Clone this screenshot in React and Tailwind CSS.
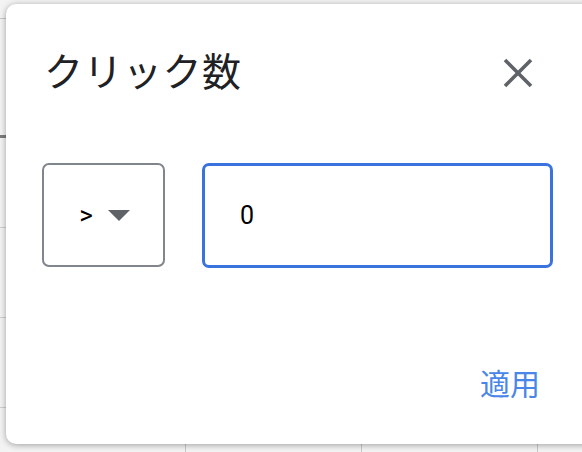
import React from "react";

const font = { fontFamily: '"Noto Sans CJK JP", "Noto Sans", Roboto, sans-serif' };

function Background() {
  return (
    <div className="flex flex-col w-full h-full bg-[#f3f3f3]">
      <div className="h-[19px] shrink-0 border-b border-[#c8c8c8]" />
      <div className="h-[119px] shrink-0 border-b-[3px] border-[#7a7d80]" />
      <div className="h-[90px] shrink-0 border-b border-[#cfcfcf]" />
      <div className="h-[90px] shrink-0 border-b border-[#cfcfcf]" />
      <div className="h-[90px] shrink-0 border-b border-[#cfcfcf]" />
      <div className="flex h-[90px] shrink-0 text-[28px] text-[#333]" style={font}>
        <div className="w-[186px] border-r border-[#c8c8c8]" />
        <div className="w-[176px] border-r border-[#c8c8c8] flex justify-end pr-[22px] pt-[38px] leading-none">4</div>
        <div className="w-[176px] border-r border-[#c8c8c8] flex justify-end pr-[20px] pt-[38px] leading-none">0</div>
        <div className="flex-1" />
      </div>
    </div>
  );
}

export default function App() {
  return (
    <div className="relative w-[582px] h-[452px] overflow-hidden" style={font}>
      <Background />
      <div className="absolute left-[6px] top-[4px] w-[620px] h-[440px] bg-white rounded-[10px] shadow-[0_1px_6px_rgba(0,0,0,0.35)] flex flex-col">
        <div className="flex items-start justify-between pl-[38px] pt-[37px] pr-[93px]">
          <div className="text-[39px] leading-[60px] tracking-[0.5px] text-[#202124] -mt-[2px]">クリック数</div>
          <svg width="30" height="30" viewBox="0 0 30 30" className="mt-[17px]">
            <path d="M2 2 L28 28 M28 2 L2 28" stroke="#5f6368" strokeWidth="3.6" strokeLinecap="butt" />
          </svg>
        </div>
        <div className="flex gap-[37px] pl-[36px] mt-[64px]">
          <div className="w-[123px] h-[104px] border-2 border-[#80868b] rounded-[7px] flex items-center justify-center gap-[15px] pl-[2px]">
            <span className="text-[26px] text-black leading-none" style={{ fontFamily: "Roboto, sans-serif" }}>&gt;</span>
            <svg width="22" height="11" viewBox="0 0 22 11">
              <path d="M0 0 L22 0 L11 11 Z" fill="#5f6368" />
            </svg>
          </div>
          <div className="w-[351px] h-[105px] border-[3px] border-[#3a73dd] rounded-[7px] flex items-center pl-[35px]">
            <span className="text-[25px] text-black leading-none" style={{ fontFamily: "Roboto, sans-serif" }}>0</span>
          </div>
        </div>
        <div className="flex justify-end pr-[86px] mt-[99px]">
          <span className="text-[30px] leading-none text-[#4a86e8]">適用</span>
        </div>
      </div>
    </div>
  );
}
